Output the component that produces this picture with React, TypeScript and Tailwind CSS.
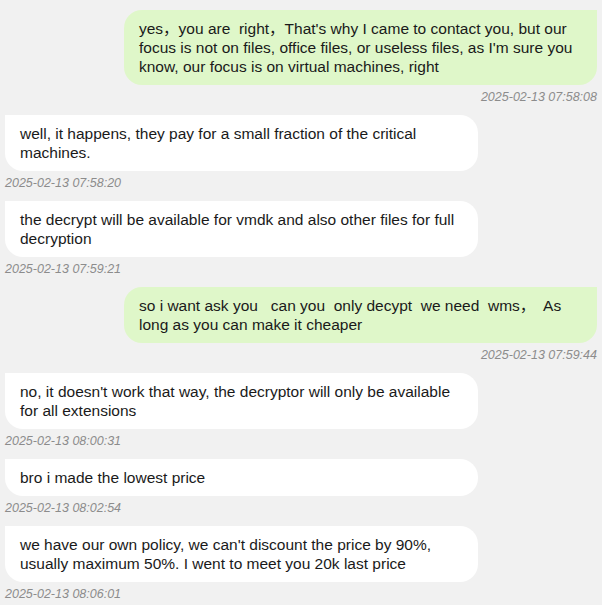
const MESSAGES = [
  {
    me: true,
    text: "yes，you are  right，That's why I came to contact you, but our focus is not on files, office files, or useless files, as I'm sure you know, our focus is on virtual machines, right",
    time: "2025-02-13 07:58:08",
  },
  {
    me: false,
    text: "well, it happens, they pay for a small fraction of the critical machines.",
    time: "2025-02-13 07:58:20",
  },
  {
    me: false,
    text: "the decrypt will be available for vmdk and also other files for full decryption",
    time: "2025-02-13 07:59:21",
  },
  {
    me: true,
    text: "so i want ask you   can you  only decypt  we need  wms，  As long as you can make it cheaper",
    time: "2025-02-13 07:59:44",
  },
  {
    me: false,
    text: "no, it doesn't work that way, the decryptor will only be available for all extensions",
    time: "2025-02-13 08:00:31",
  },
  {
    me: false,
    text: "bro i made the lowest price",
    time: "2025-02-13 08:02:54",
  },
  {
    me: false,
    text: "we have our own policy, we can't discount the price by 90%, usually maximum 50%. I went to meet you 20k last price",
    time: "2025-02-13 08:06:01",
  },
];

export default function App() {
  return (
    <div
      className="min-h-[605px] w-[602px] bg-[#f1f1f1] px-[5px] pt-[10px] flex flex-col gap-[10px]"
      style={{ fontFamily: '"Liberation Sans", Arial, "Noto Sans CJK SC", sans-serif' }}
    >
      {MESSAGES.map((m, i) => (
        <div key={i} className={`flex flex-col ${m.me ? "items-end" : "items-start"}`}>
          <div
            className={`w-[473px] pl-[15px] pr-[13px] py-[9px] text-[15.5px] leading-[19px] text-[#1a1a1a] whitespace-pre-wrap ${
              m.me
                ? "bg-[#dff7c9] rounded-[18px] rounded-tr-none"
                : "bg-white rounded-[18px] rounded-tl-none"
            }`}
          >
            {m.text}
          </div>
          <div className="mt-[4px] text-[12.5px] leading-[16px] italic text-[#8c8c8c]">{m.time}</div>
        </div>
      ))}
    </div>
  );
}
